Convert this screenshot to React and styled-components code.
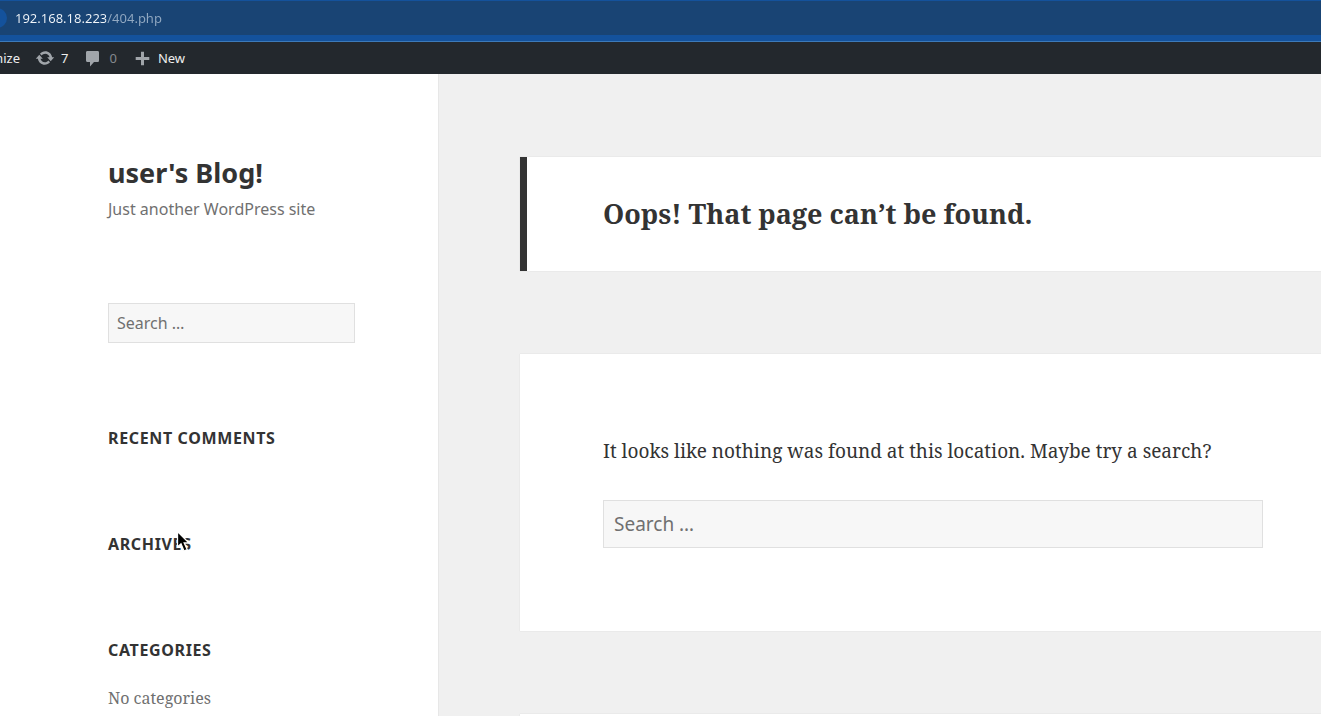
import React from 'react';
import styled, { createGlobalStyle } from 'styled-components';

const sans = '"Noto Sans", sans-serif';
const serif = '"Noto Serif", "DejaVu Serif Condensed", "DejaVu Serif", serif';

const GlobalStyle = createGlobalStyle`
  *, *::before, *::after { box-sizing: border-box; }
  body {
    margin: 0;
    background: #f0f0f0;
    color: #333;
    font-family: ${sans};
    overflow: hidden;
  }
  h1, h2, p { margin: 0; }
`;

const Page = styled.div`
  display: flex;
  flex-direction: column;
  height: 100vh;
  overflow: hidden;
`;

const BrowserBar = styled.div`
  display: flex;
  flex-shrink: 0;
  height: 42px;
  padding: 1px 0 6px;
  background: #14529c;
  border-bottom: 1px solid #3d7ab8;
`;

const AddressForm = styled.form`
  display: flex;
  flex: 1;
  align-items: center;
  gap: 8px;
  overflow: hidden;
  background: #194474;
`;

const SiteBadge = styled.span`
  flex-shrink: 0;
  width: 20px;
  height: 20px;
  margin-left: -13px;
  border-radius: 50%;
  background: #14529c;
`;

const AddressInput = styled.input`
  flex: 1;
  min-width: 0;
  padding: 0;
  border: 0;
  outline: 0;
  background: linear-gradient(90deg, #f2f6fa 91px, #92a9c2 91px);
  background-clip: text;
  -webkit-text-fill-color: transparent;
  color: #f2f6fa;
  font: 13px/20px ${sans};
`;

const AdminBar = styled.nav`
  display: flex;
  flex-shrink: 0;
  align-items: center;
  gap: 15px;
  height: 32px;
  overflow: hidden;
  background: #23282d;
`;

const AdminLink = styled.a`
  display: flex;
  align-items: center;
  gap: 6px;
  color: ${({ $muted }) => ($muted ? '#85898d' : '#eee')};
  font-size: 13px;
  line-height: 32px;
  text-decoration: none;
`;

const ClippedLink = styled(AdminLink)`
  width: 20px;
  justify-content: flex-end;
`;

const Icon = styled.svg`
  width: 20px;
  height: 20px;
  fill: #a0a5aa;
`;

const Columns = styled.div`
  display: flex;
  flex: 1;
  min-height: 0;
`;

const Sidebar = styled.aside`
  flex: 0 0 439px;
  padding: 80px 83px 0 108px;
  background: #fff;
  border-right: 1px solid #e7e7e7;
`;

const SiteTitle = styled.h1`
  font-size: 27px;
  line-height: 38px;
`;

const Tagline = styled.p`
  color: #707070;
  font-size: 16px;
  line-height: 24px;
  margin-top: 5px;
`;

const SearchForm = styled.form`
  display: flex;
  margin-top: ${({ $large }) => ($large ? 33 : 82)}px;
`;

const SearchInput = styled.input`
  width: 100%;
  height: ${({ $large }) => ($large ? 48 : 40)}px;
  padding: 0 ${({ $large }) => ($large ? 10 : 8)}px;
  border: 1px solid #e0e0e0;
  border-radius: 0;
  outline: 0;
  background: #f7f7f7;
  color: #707070;
  font-family: ${sans};
  font-size: ${({ $large }) => ($large ? 19 : 16)}px;
  &::placeholder { color: #707070; opacity: 1; }
`;

const Widgets = styled.div`
  display: flex;
  flex-direction: column;
  gap: 82px;
  margin-top: 83px;
`;

const WidgetTitle = styled.h2`
  font-size: 16px;
  line-height: 24px;
  letter-spacing: 0.04em;
  text-transform: uppercase;
`;

const WidgetText = styled.p`
  margin-top: 24px;
  color: #707070;
  font: 16px/24px ${serif};
`;

const Main = styled.main`
  display: flex;
  flex: 1;
  flex-direction: column;
  gap: 83px;
  min-width: 0;
  padding: 83px 0 0 81px;
`;

const Card = styled.section`
  flex-shrink: 0;
  background: #fff;
  box-shadow: 0 0 1px rgba(0, 0, 0, 0.15);
`;

const HeaderCard = styled(Card)`
  padding: 38px 58px 38px 76px;
  border-left: 7px solid #333;
`;

const PageTitle = styled.h1`
  font: bold 27px/38px ${serif};
`;

const ContentCard = styled(Card)`
  padding: 81px 58px 83px 83px;
`;

const Message = styled.p`
  font: 19px/32px ${serif};
`;

const FooterCard = styled(Card)`
  height: 83px;
`;

const Cursor = styled.svg`
  position: absolute;
  left: 175px;
  top: 529px;
  width: 16px;
  height: 26px;
  pointer-events: none;
`;

export default function App() {
  return (
    <Page>
      <GlobalStyle />
      <BrowserBar>
        <AddressForm>
          <SiteBadge />
          <AddressInput aria-label="Address" defaultValue="192.168.18.223/404.php" spellCheck={false} />
        </AddressForm>
      </BrowserBar>
      <AdminBar aria-label="Admin bar">
        <ClippedLink href="#customize">Customize</ClippedLink>
        <AdminLink href="#updates">
          <Icon viewBox="0 0 20 20" aria-hidden="true">
            <path d="M10.2 3.28c3.53 0 6.43 2.61 6.92 6h2.08l-3.5 4-3.5-4h2.32c-.45-1.97-2.21-3.45-4.32-3.45-1.45 0-2.73.71-3.54 1.78L4.95 5.66C6.23 4.2 8.11 3.28 10.2 3.28zm-.4 13.44c-3.52 0-6.43-2.61-6.92-6H.8l3.5-4c1.17 1.33 2.33 2.67 3.5 4H5.48c.45 1.97 2.21 3.45 4.32 3.45 1.45 0 2.73-.71 3.54-1.78l1.71 1.95c-1.28 1.46-3.15 2.38-5.25 2.38z" />
          </Icon>
          7
        </AdminLink>
        <AdminLink href="#comments" $muted>
          <Icon viewBox="0 0 20 20" aria-hidden="true">
            <path d="M4.500 3h10c1.1 0 1.500.6 1.500 1.500v8c0 1-.6 1.500-1.500 1.500H11l-4 4.500V14H4.500c-1 0-1.500-.6-1.500-1.500v-8C3 3.500 3.600 3 4.500 3z" />
          </Icon>
          0
        </AdminLink>
        <AdminLink href="#new">
          <Icon viewBox="0 0 20 20" aria-hidden="true">
            <path d="M17.300 9v3H12v5.300H9V12H3.700V9H9V3.700h3V9z" />
          </Icon>
          New
        </AdminLink>
      </AdminBar>
      <Columns>
        <Sidebar>
          <SiteTitle>user's Blog!</SiteTitle>
          <Tagline>Just another WordPress site</Tagline>
          <SearchForm role="search">
            <SearchInput type="search" aria-label="Search the site" placeholder="Search …" />
          </SearchForm>
          <Widgets>
            <section>
              <WidgetTitle>Recent Comments</WidgetTitle>
            </section>
            <section>
              <WidgetTitle>Archives</WidgetTitle>
            </section>
            <section>
              <WidgetTitle>Categories</WidgetTitle>
              <WidgetText>No categories</WidgetText>
            </section>
          </Widgets>
        </Sidebar>
        <Main>
          <HeaderCard>
            <PageTitle>Oops! That page can’t be found.</PageTitle>
          </HeaderCard>
          <ContentCard>
            <Message>It looks like nothing was found at this location. Maybe try a search?</Message>
            <SearchForm role="search" $large>
              <SearchInput type="search" aria-label="Search for a page" placeholder="Search …" $large />
            </SearchForm>
          </ContentCard>
          <FooterCard />
        </Main>
      </Columns>
      <Cursor viewBox="0 0 16 26" aria-hidden="true">
        <path d="M2.500 2.500v15.500l3.500-3.200 3 7.200 3.200-1.400-3-6.600H14z" fill="#000" stroke="#fff" strokeWidth="1.300" />
      </Cursor>
    </Page>
  );
}
